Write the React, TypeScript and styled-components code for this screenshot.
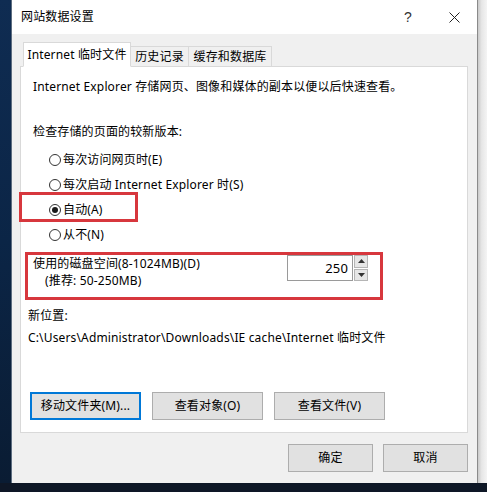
import styled, { createGlobalStyle } from 'styled-components'

const FONT = '"Noto Sans", "Noto Sans CJK SC", sans-serif'
const RED = '#d7373d'

const GlobalStyle = createGlobalStyle`
    html, body {
        margin: 0;
        padding: 0;
        background: #ffffff;
    }
    body {
        font-family: ${FONT};
        font-size: 12px;
        letter-spacing: 0.15px;
        color: #000;
    }
`

const Desktop = styled.div`
    width: 487px;
    height: 492px;
    display: grid;
    grid-template-columns: 11px 467px 9px;
    grid-template-rows: 483px 9px;
    overflow: hidden;
`

const LeftStrip = styled.div`
    background: linear-gradient(180deg, #0f2c52 0%, #0b2546 50%, #0a1c33 100%);
`

const RightShadow = styled.div`
    background: linear-gradient(90deg, #c9c9c9 0%, #e6e6e6 40%, #f4f4f4 100%);
`

const BottomBar = styled.div`
    grid-column: 1 / 4;
    background: #0e1726;
`

const Window = styled.div`
    display: flex;
    flex-direction: column;
    background: #f0f0f0;
    border-right: 1px solid #8a8a8a;
    border-left: 1px solid #5d6d80;
`

const TitleBar = styled.div`
    height: 34px;
    background: #ffffff;
    display: flex;
    align-items: center;
    padding-left: 9px;
`

const TitleText = styled.div`
    flex: 1;
    font-size: 12px;
    line-height: 16px;
`

const ControlButton = styled.div`
    width: 46px;
    height: 34px;
    display: flex;
    align-items: center;
    justify-content: center;
    font-family: "Liberation Sans", sans-serif;
    font-size: 14px;
    color: #333;
`

const Body = styled.div`
    flex: 1;
    padding: 8px 9px 0 8px;
    display: flex;
    flex-direction: column;
`

const TabBar = styled.div`
    display: flex;
    align-items: flex-end;
    padding-left: 3px;
    position: relative;
    z-index: 1;
    margin-bottom: -1px;
`

const Tab = styled.div<{ $active?: boolean; $width: number }>`
    width: ${p => p.$width}px;
    height: ${p => (p.$active ? 25 : 21)}px;
    box-sizing: border-box;
    display: flex;
    align-items: center;
    justify-content: center;
    white-space: nowrap;
    background: ${p => (p.$active ? '#ffffff' : '#f0f0f0')};
    border: 1px solid #d9d9d9;
    border-bottom: ${p => (p.$active ? '1px solid #ffffff' : '1px solid #d9d9d9')};
    ${p => (!p.$active ? 'border-left: none;' : '')}
    line-height: 16px;
`

const Panel = styled.div`
    height: 367px;
    box-sizing: border-box;
    background: #ffffff;
    border: 1px solid #d9d9d9;
    padding: 12px 0 0 0;
    display: flex;
    flex-direction: column;
`

const Line = styled.div<{ $indent: number; $top?: number }>`
    margin-left: ${p => p.$indent}px;
    margin-top: ${p => p.$top ?? 0}px;
    line-height: 16px;
    height: 16px;
    white-space: nowrap;
`

const RadioGroup = styled.div`
    margin-top: 7px;
    display: flex;
    flex-direction: column;
`

const RadioRow = styled.div<{ $marked?: boolean }>`
    position: relative;
    height: 25px;
    display: flex;
    align-items: center;
    padding-left: 28px;
    gap: 2px;
    line-height: 16px;
    white-space: nowrap;

    ${p =>
        p.$marked &&
        `
        &::after {
            content: '';
            position: absolute;
            left: -2px;
            top: -5px;
            width: 119px;
            height: 30px;
            box-sizing: border-box;
            border: 3px solid ${RED};
            pointer-events: none;
        }
    `}
`

const RadioCircle = styled.span<{ $checked?: boolean }>`
    width: 12px;
    height: 12px;
    box-sizing: border-box;
    border: 1px solid #333333;
    border-radius: 50%;
    background: #ffffff;
    display: flex;
    align-items: center;
    justify-content: center;

    &::before {
        content: '';
        display: ${p => (p.$checked ? 'block' : 'none')};
        width: 6px;
        height: 6px;
        border-radius: 50%;
        background: #1a1a1a;
    }
`

const DiskSection = styled.div`
    position: relative;
    margin-top: 8px;
    display: flex;
    align-items: flex-start;
    padding-left: 12px;

    &::after {
        content: '';
        position: absolute;
        left: 4px;
        top: -3px;
        width: 358px;
        height: 48px;
        box-sizing: border-box;
        border: 3px solid ${RED};
        pointer-events: none;
    }
`

const DiskText = styled.div`
    flex: 1;
    display: flex;
    flex-direction: column;
`

const DiskLine = styled.div<{ $indent?: number }>`
    height: 17px;
    line-height: 17px;
    padding-left: ${p => p.$indent ?? 0}px;
    white-space: nowrap;
`

const Spinner = styled.div`
    display: flex;
    margin-right: 99px;
`

const SpinInput = styled.div`
    width: 66px;
    height: 26px;
    box-sizing: border-box;
    border: 1px solid #9a9a9a;
    background: #ffffff;
    display: flex;
    align-items: center;
    justify-content: flex-end;
    padding-right: 4px;
    font-size: 13px;
`

const SpinButtons = styled.div`
    display: flex;
    flex-direction: column;
    margin-left: 1px;
    gap: 1px;
    height: 26px;
`

const SpinButton = styled.div`
    width: 14px;
    flex: 1;
    box-sizing: border-box;
    background: #e6e6e6;
    border: 1px solid #b5b5b5;
    display: flex;
    align-items: center;
    justify-content: center;
`

const ButtonRow = styled.div`
    margin-top: 46px;
    margin-left: 9px;
    display: flex;
    gap: 11px;
`

const Button = styled.div<{ $focused?: boolean; $width?: number }>`
    width: ${p => p.$width ?? 111}px;
    height: 28px;
    box-sizing: border-box;
    background: #e1e1e1;
    border: ${p => (p.$focused ? '2px solid #0078d7' : '1px solid #adadad')};
    display: flex;
    align-items: center;
    justify-content: center;
    line-height: 16px;
    white-space: nowrap;
`

const Footer = styled.div`
    margin-top: 11px;
    display: flex;
    justify-content: flex-end;
    gap: 10px;
`

const Arrow = ({ up }: { up?: boolean }) => (
    <svg width="7" height="4" viewBox="0 0 7 4">
        <path d={up ? 'M0 4 L3.5 0 L7 4 Z' : 'M0 0 L3.5 4 L7 0 Z'} fill="#333" />
    </svg>
)

const CloseIcon = () => (
    <svg width="11" height="11" viewBox="0 0 11 11">
        <path d="M0.5 0.5 L10.5 10.5 M10.5 0.5 L0.5 10.5" stroke="#222" strokeWidth="1" />
    </svg>
)

const tabs = [
    { label: 'Internet 临时文件', width: 108, active: true },
    { label: '历史记录', width: 58 },
    { label: '缓存和数据库', width: 83 },
]

const radios = [
    { label: '每次访问网页时(E)' },
    { label: '每次启动 Internet Explorer 时(S)' },
    { label: '自动(A)', checked: true },
    { label: '从不(N)' },
]

const App = () => {
    return (
        <>
            <GlobalStyle />
            <Desktop>
                <LeftStrip />
                <Window>
                    <TitleBar>
                        <TitleText>网站数据设置</TitleText>
                        <ControlButton>?</ControlButton>
                        <ControlButton>
                            <CloseIcon />
                        </ControlButton>
                    </TitleBar>
                    <Body>
                        <TabBar>
                            {tabs.map(t => (
                                <Tab key={t.label} $active={t.active} $width={t.width}>{t.label}</Tab>
                            ))}
                        </TabBar>
                        <Panel>
                            <Line $indent={12}>Internet Explorer 存储网页、图像和媒体的副本以便以后快速查看。</Line>
                            <Line $indent={12} $top={29}>检查存储的页面的较新版本:</Line>
                            <RadioGroup>
                                {radios.map(r => (
                                    <RadioRow key={r.label} $marked={r.checked}>
                                        <RadioCircle $checked={r.checked} />
                                        {r.label}
                                    </RadioRow>
                                ))}
                            </RadioGroup>
                            <DiskSection>
                                <DiskText>
                                    <DiskLine>使用的磁盘空间(8-1024MB)(D)</DiskLine>
                                    <DiskLine $indent={12}>(推荐: 50-250MB)</DiskLine>
                                </DiskText>
                                <Spinner>
                                    <SpinInput>250</SpinInput>
                                    <SpinButtons>
                                        <SpinButton><Arrow up /></SpinButton>
                                        <SpinButton><Arrow /></SpinButton>
                                    </SpinButtons>
                                </Spinner>
                            </DiskSection>
                            <Line $indent={7} $top={19}>新位置:</Line>
                            <Line $indent={7} $top={6}>C:\Users\Administrator\Downloads\IE cache\Internet 临时文件</Line>
                            <ButtonRow>
                                <Button $focused>移动文件夹(M)...</Button>
                                <Button>查看对象(O)</Button>
                                <Button>查看文件(V)</Button>
                            </ButtonRow>
                        </Panel>
                        <Footer>
                            <Button $width={85}>确定</Button>
                            <Button $width={85}>取消</Button>
                        </Footer>
                    </Body>
                </Window>
                <RightShadow />
                <BottomBar />
            </Desktop>
        </>
    )
}

export default App
